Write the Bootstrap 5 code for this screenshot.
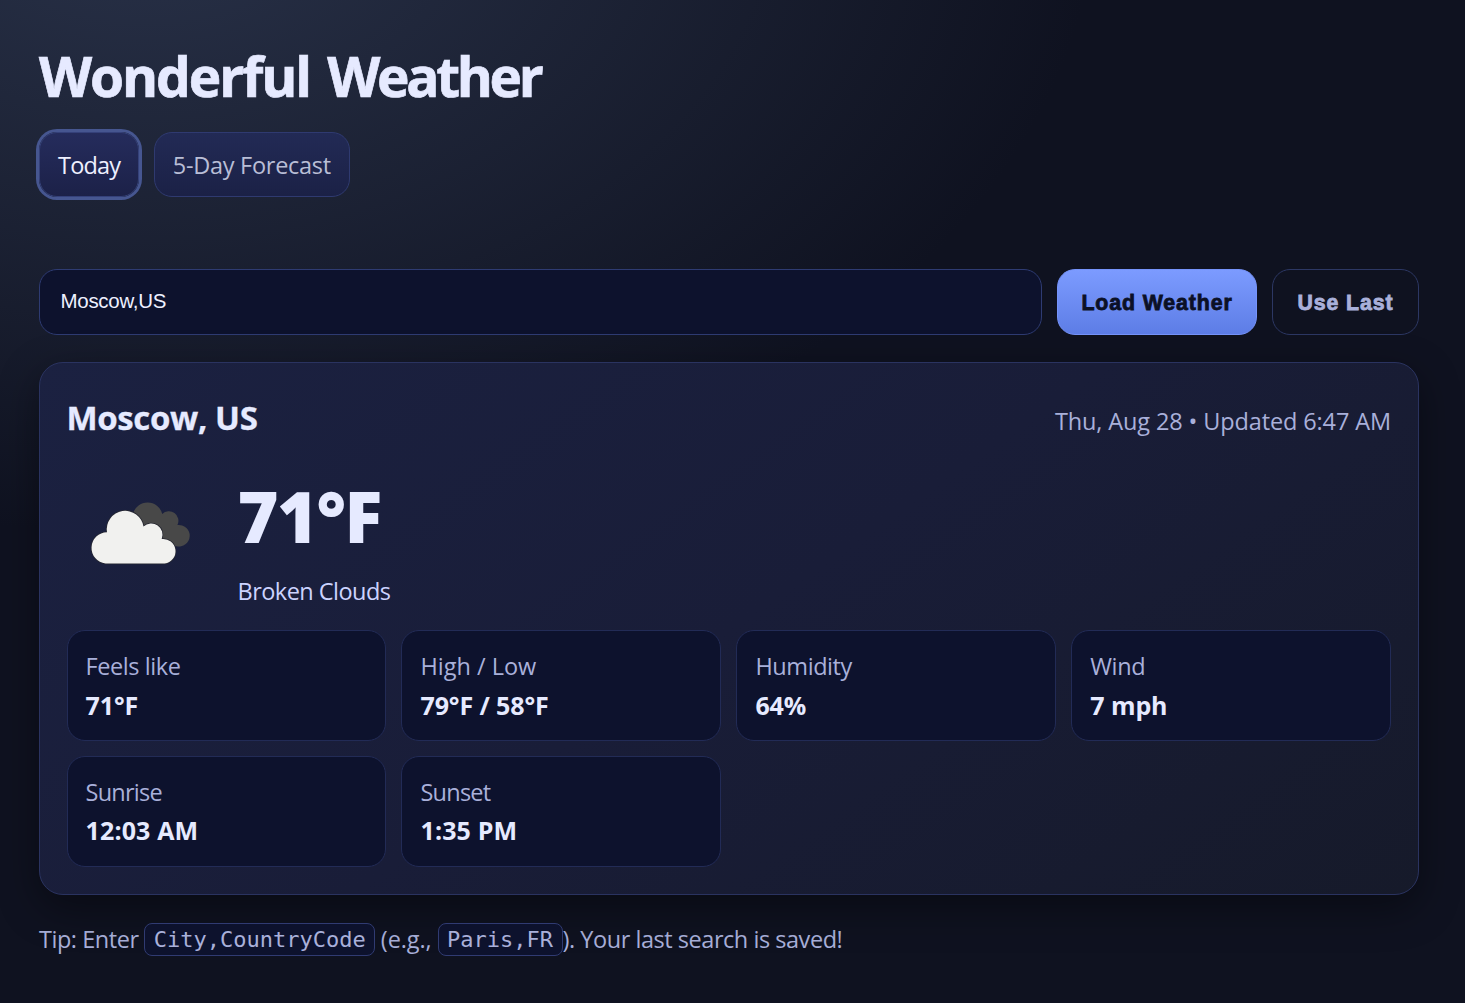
<!DOCTYPE html>
<html lang="en">
<head>
<meta charset="utf-8">
<meta name="viewport" content="width=device-width, initial-scale=1">
<title>Wonderful Weather</title>
<link rel="stylesheet" href="https://cdn.jsdelivr.net/npm/bootstrap@5.3.0/dist/css/bootstrap.min.css">
<style>
  :root{--ink:#e6eaff;--muted:#a9b0da;--panel:#0d122d}
  body{
    min-height:100vh;color:var(--ink);
    font-family:"Open Sans","Noto Sans",sans-serif;font-size:23.5px;line-height:32px;letter-spacing:-.42px;
    background:radial-gradient(1584px 1056px at 10% -100px,#293249 0%,transparent 60%) no-repeat #0f1220;
  }
  .page{padding:43px 46px 0 39px}
  .brand{font-size:55px;line-height:66px;font-weight:700;letter-spacing:-2.1px;word-spacing:5px;-webkit-text-stroke:.7px currentColor;margin-bottom:23px}
  .brand span{letter-spacing:-3.3px}
  .tabs{gap:15px;margin-bottom:72px}
  .tab{
    height:65px;padding:0 18px;border:1px solid #2f3a70;border-radius:18px;
    background:linear-gradient(180deg,#222a55,#1b2146);
    color:#b9bed6;font-size:inherit;line-height:32px;letter-spacing:-.28px;
  }
  .tab:hover{color:var(--ink)}
  .tab.active{color:#eef0ff;letter-spacing:-.8px;padding:0 17.5px 0 18px;border-color:#35417a;background:linear-gradient(180deg,#252c5c,#1c2148);box-shadow:0 0 0 3px #465690}
  .search{gap:15px;margin-bottom:27px}
  .search .form-control,.search .btn{height:66px;border-radius:18px;font-family:"Liberation Sans",Arial,sans-serif}
  .search .form-control{background:var(--panel);border:1px solid #2e3b72;color:#eef0ff;font-size:20.5px;padding:0 20px 3px 20.5px;letter-spacing:-.3px}
  .search .btn{font-size:21.3px;font-weight:800;letter-spacing:.9px;padding:3px 0 0;-webkit-text-stroke:.8px currentColor}
  .load{width:200px;color:#0b1026;border:1px solid #7593fa;background:linear-gradient(180deg,#7c9bff,#5d7de6)}
  .last{width:147px;color:var(--muted);border:1px solid #2c3763}
  .weather{
    padding:27px;border:1px solid #2a3360;border-radius:24px;color:var(--ink);height:533px;
    background:linear-gradient(145deg,#1b2141 0%,#191d38 50%,#161a2a 100%);
    box-shadow:0 13px 40px rgba(0,0,0,.4);
  }
  .place{font-size:33px;line-height:44px;font-weight:700;letter-spacing:-.37px;-webkit-text-stroke:.3px currentColor}
  .stamp{color:var(--muted);letter-spacing:-.12px}
  .headline{padding-top:6px;margin-left:-.5px}
  .now{gap:27px;height:166px;margin:11px 0 15px}
  .icon{width:144px;height:144px;margin-left:-.5px}
  .temp{font-size:70px;line-height:78px;font-weight:800;letter-spacing:-1.5px;padding-top:17px}
  .cond{color:#ccd3ff;letter-spacing:-.53px;margin-top:20px}
  .stats{display:grid;grid-template-columns:repeat(4,1fr);gap:15px 15.3px;margin-left:-.5px}
  .stat{height:111px;padding:19px 18px 0;background:var(--panel);border:1px solid #222b56;border-radius:18px}
  .stat dt{font-weight:400;color:var(--muted)}
  .stat dd{font-size:25px;font-weight:700;letter-spacing:-.1px;margin:7px 0 0}
  .stat .clock{letter-spacing:.15px;margin-top:6px}
  .plain{letter-spacing:0}
  .tight{letter-spacing:-.75px}
  .tip{color:var(--muted);margin:28px 0 0;letter-spacing:-.46px;white-space:nowrap}
  .tip code{
    display:inline-block;color:var(--muted);background:var(--panel);border:1px solid #303b72;border-radius:8px;
    font:22px/31px "DejaVu Sans Mono",monospace;padding:0 8.5px;
    position:relative;top:-1px;letter-spacing:0
  }
  .tip .eg{letter-spacing:-.1px}
</style>
</head>
<body>
<div class="page">
  <h1 class="brand">Wonderful <span>Weather</span></h1>
  <nav class="tabs d-flex">
    <button class="btn tab active" type="button">Today</button>
    <button class="btn tab" type="button">5-Day Forecast</button>
  </nav>
  <form class="search d-flex">
    <input class="form-control flex-grow-1 w-auto" type="text" value="Moscow,US" aria-label="City">
    <button class="btn load flex-shrink-0" type="button">Load Weather</button>
    <button class="btn last flex-shrink-0" type="button">Use Last</button>
  </form>
  <section class="card weather">
    <div class="headline d-flex justify-content-between align-items-baseline">
      <h2 class="place mb-0">Moscow, US</h2>
      <span class="stamp">Thu, Aug 28 • Updated 6:47 AM</span>
    </div>
    <div class="now d-flex align-items-center">
      <svg class="icon flex-shrink-0" viewBox="67 461 144 144" aria-hidden="true">
        <path fill="#484848" d="M133 514a15 15 0 0 1 29.200 0a9.500 9.500 0 0 1 15.200 11a10.800 10.800 0 1 1-1 21.200H150z"/>
        <path fill="#f1f1ef" stroke="#272832" stroke-width="1.500" paint-order="stroke" d="M105.500 563.500a15.700 15.700 0 0 1 1.500-31.300a18.300 18.300 0 1 1 36.500-5.700a11.300 11.300 0 0 1 18.200 12.500a12.300 12.300 0 0 1 3 24.500z"/>
      </svg>
      <div>
        <div class="temp">71°F</div>
        <div class="cond">Broken Clouds</div>
      </div>
    </div>
    <dl class="stats mb-0">
      <div class="stat"><dt>Feels like</dt><dd>71°F</dd></div>
      <div class="stat"><dt class="plain">High / Low</dt><dd>79°F / 58°F</dd></div>
      <div class="stat"><dt>Humidity</dt><dd>64%</dd></div>
      <div class="stat"><dt>Wind</dt><dd>7 mph</dd></div>
      <div class="stat"><dt class="tight">Sunrise</dt><dd class="clock">12:03 AM</dd></div>
      <div class="stat"><dt class="tight">Sunset</dt><dd class="clock">1:35 PM</dd></div>
    </dl>
  </section>
  <p class="tip">Tip: Enter <code>City,CountryCode</code> <span class="eg">(e.g., </span><code>Paris,FR</code>). Your last search is saved!</p>
</div>
<script src="https://cdn.jsdelivr.net/npm/bootstrap@5.3.0/dist/js/bootstrap.bundle.min.js"></script>
</body>
</html>
